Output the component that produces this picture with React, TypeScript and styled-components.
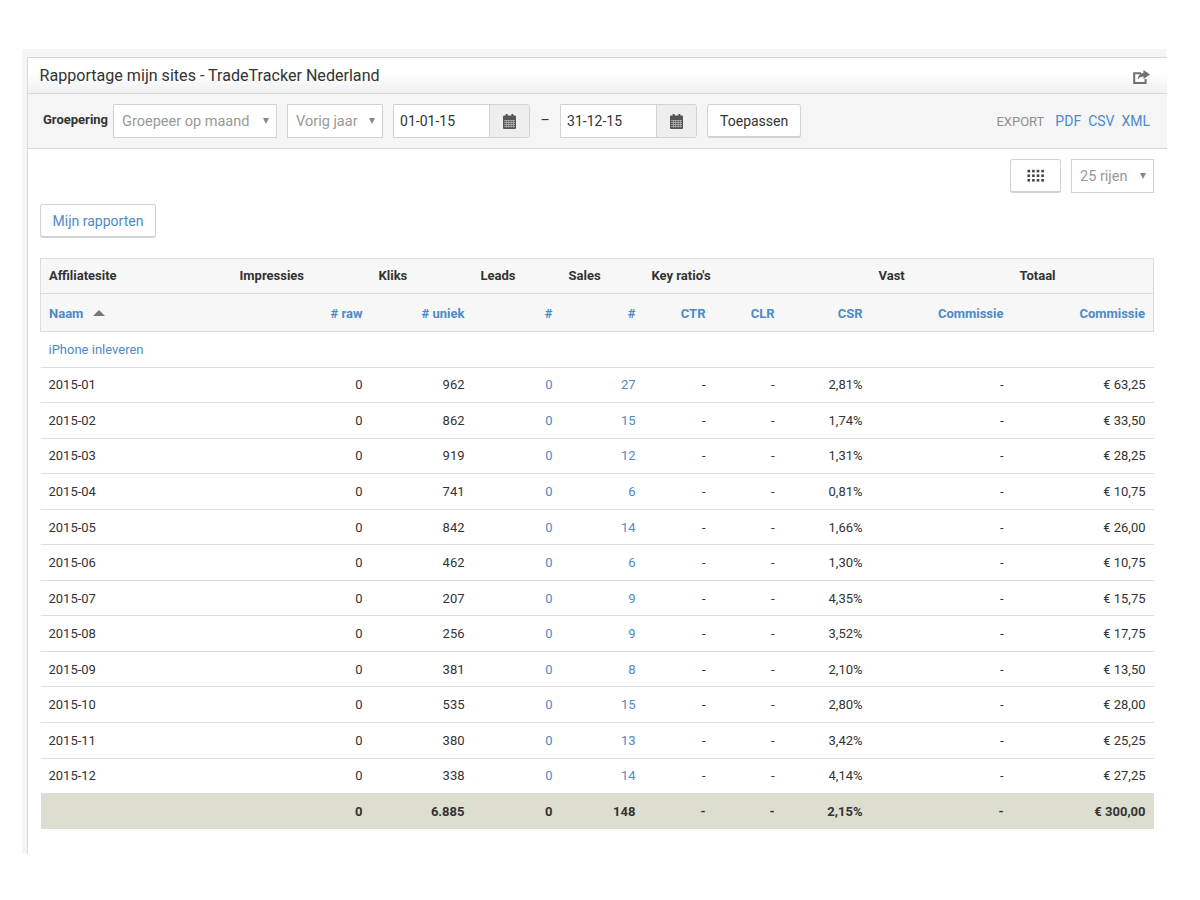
import React from "react";
import styled, { createGlobalStyle } from "styled-components";

const GlobalStyle = createGlobalStyle`
  html, body {
    margin: 0;
    padding: 0;
    background: #fff;
    font-family: Roboto, "Liberation Sans", sans-serif;
    font-size: 13px;
    color: #333;
  }
`;

const linkBlue = "#4d8ac6";

// Page shell
const Shell = styled.div`
  margin-left: 22px;
  width: 1143.5px;
  margin-top: 49px;
  height: 805px;
  padding: 8px 0 0 5px;
  box-sizing: border-box;
  background: #f4f5f8;
  display: flex;
`;

const Panel = styled.div`
  flex: 1;
  background: #fff;
  border-left: 1px solid #d6d8de;
  border-top: 1px solid #d6d6d6;
  display: flex;
  flex-direction: column;
`;

const PanelHeader = styled.div`
  height: 35px;
  border-bottom: 1px solid #dadada;
  background: linear-gradient(to bottom, #fff 45%, #eef0f2 100%);
  display: flex;
  align-items: center;
  justify-content: space-between;
  padding: 0 16.5px 0 11.5px;
`;

const PanelTitle = styled.h2`
  margin: 0;
  font-size: 16.1px;
  font-weight: 400;
  color: #333;
`;

const ShareButton = styled.span`
  display: flex;
  margin-top: 3px;
`;

// Filter bar
const Toolbar = styled.div`
  height: 55px;
  box-sizing: border-box;
  background: #f5f5f5;
  border-bottom: 1px solid #d8d8d8;
  display: flex;
  align-items: center;
  padding: 0 16.5px 0 15px;
`;

const FilterLabel = styled.label`
  font-size: 13px;
  font-weight: 700;
  color: #333;
  margin-right: 5px;
  margin-bottom: 3px;
`;

const Select = styled.div<{ $width: number; $gap?: number }>`
  width: ${(p) => p.$width}px;
  height: 34px;
  box-sizing: border-box;
  flex: none;
  margin-right: ${(p) => p.$gap ?? 0}px;
  background: #fff;
  border: 1px solid #d2d2d2;
  color: #999;
  font-size: 14.5px;
  display: flex;
  align-items: center;
  justify-content: space-between;
  padding: 0 7px 0 8px;
`;

const Caret = styled.span`
  width: 0;
  height: 0;
  border-left: 3.5px solid transparent;
  border-right: 3.5px solid transparent;
  border-top: 6px solid #888;
`;

const DateGroup = styled.div`
  display: flex;
  width: 137px;
  height: 34px;
  flex: none;
  box-sizing: border-box;
  border: 1px solid #d2d2d2;
  border-radius: 0 3px 3px 0;
  overflow: hidden;
`;

const DateValue = styled.div`
  flex: 1;
  background: #fff;
  display: flex;
  align-items: center;
  padding-left: 6px;
  font-size: 14px;
  color: #333;
`;

const DateAddon = styled.div`
  width: 39px;
  background: #eee;
  border-left: 1px solid #d2d2d2;
  display: flex;
  align-items: center;
  justify-content: center;
`;

const DateDash = styled.span`
  width: 30px;
  text-align: center;
  font-size: 14px;
  color: #333;
  flex: none;
  margin-bottom: 3px;
`;

const Button = styled.button`
  box-sizing: border-box;
  height: 34px;
  flex: none;
  background: #fff;
  border: 1px solid #d2d2d2;
  border-bottom-width: 2px;
  border-radius: 3px;
  font-family: inherit;
  font-size: 14px;
  color: #333;
  padding: 0 12px;
  cursor: pointer;
`;

const ApplyButton = styled(Button)`
  margin-left: 10px;
`;

const ExportGroup = styled.div`
  margin-left: auto;
  display: flex;
  align-items: center;
  gap: 7px;
  font-size: 14px;
`;

const ExportLabel = styled.span`
  font-size: 13px;
  color: #8f8f8f;
  margin-right: 4px;
`;

const ExportLink = styled.a`
  color: ${linkBlue};
`;

// Report body
const Content = styled.div`
  padding: 10px 12.5px 0 12px;
`;

const TableOptions = styled.div`
  display: flex;
  justify-content: flex-end;
  align-items: flex-start;
  gap: 10px;
`;

const GridButton = styled(Button)`
  width: 51px;
  display: flex;
  align-items: center;
  justify-content: center;
  padding: 0;
`;

const ReportsButton = styled(Button)`
  display: block;
  margin-top: 11px;
  width: 116px;
  color: ${linkBlue};
  padding: 0;
`;

const ReportTable = styled.table`
  margin-top: 20px;
  width: 1113px;
  table-layout: fixed;
  border-collapse: collapse;
`;

const HeadCell = styled.th<{ $right?: boolean; $blue?: boolean; $height: number; $shift: number }>`
  height: ${(p) => p.$height}px;
  padding: ${(p) => Math.max(p.$shift, 0)}px 8px ${(p) => Math.max(-p.$shift, 0)}px;
  box-sizing: border-box;
  background: #f7f7f7;
  border-top: 1px solid #dcdcdc;
  border-bottom: 1px solid #dcdcdc;
  font-size: 13px;
  font-weight: 700;
  text-align: ${(p) => (p.$right ? "right" : "left")};
  color: ${(p) => (p.$blue ? linkBlue : "#333")};
  white-space: nowrap;
  &:first-child {
    border-left: 1px solid #dcdcdc;
  }
  &:last-child {
    border-right: 1px solid #dcdcdc;
  }
`;

const SortArrow = styled.span`
  display: inline-block;
  width: 0;
  height: 0;
  margin-left: 6px;
  vertical-align: 2px;
  border-left: 6px solid transparent;
  border-right: 6px solid transparent;
  border-bottom: 6px solid #777;
`;

const Cell = styled.td<{ $right?: boolean; $blue?: boolean }>`
  height: 35.55px;
  padding: 0 8px;
  box-sizing: border-box;
  border-bottom: 1px solid #dedede;
  font-size: 13px;
  text-align: ${(p) => (p.$right ? "right" : "left")};
  color: ${(p) => (p.$blue ? linkBlue : "#333")};
`;

const TotalCell = styled.td<{ $right?: boolean }>`
  height: 35.5px;
  padding: 0 8px;
  box-sizing: border-box;
  background: #dddecf;
  font-size: 13px;
  font-weight: 700;
  color: #333;
  text-align: ${(p) => (p.$right ? "right" : "left")};
`;

const columnWidths = [191, 139, 102, 88, 83, 70, 69, 88, 141, 142];

const groups: [string, number][] = [
  ["Affiliatesite", 1],
  ["Impressies", 1],
  ["Kliks", 1],
  ["Leads", 1],
  ["Sales", 1],
  ["Key ratio's", 3],
  ["Vast", 1],
  ["Totaal", 1],
];

const subHeads = ["# raw", "# uniek", "#", "#", "CTR", "CLR", "CSR", "Commissie", "Commissie"];

const rows = [
  ["2015-01", "962", "27", "2,81%", "63,25"],
  ["2015-02", "862", "15", "1,74%", "33,50"],
  ["2015-03", "919", "12", "1,31%", "28,25"],
  ["2015-04", "741", "6", "0,81%", "10,75"],
  ["2015-05", "842", "14", "1,66%", "26,00"],
  ["2015-06", "462", "6", "1,30%", "10,75"],
  ["2015-07", "207", "9", "4,35%", "15,75"],
  ["2015-08", "256", "9", "3,52%", "17,75"],
  ["2015-09", "381", "8", "2,10%", "13,50"],
  ["2015-10", "535", "15", "2,80%", "28,00"],
  ["2015-11", "380", "13", "3,42%", "25,25"],
  ["2015-12", "338", "14", "4,14%", "27,25"],
];

const totals = ["0", "6.885", "0", "148", "-", "-", "2,15%", "-", "€ 300,00"];

const GridIcon = () => (
  <svg width="17" height="13" viewBox="0 0 17 13" fill="#444">
    {[0, 1, 2].map((r) =>
      [0, 1, 2, 3].map((c) => (
        <rect key={`${r}-${c}`} x={c * 4.6 + 0.5} y={r * 4.6 + 0.8} width="2.6" height="2.6" />
      ))
    )}
  </svg>
);

const CalendarIcon = () => (
  <svg width="13" height="15" viewBox="0 0 13 15">
    <rect x="0" y="1.5" width="13" height="13.5" rx="1" fill="#555" />
    <rect x="2.6" y="0" width="2" height="3.4" fill="#555" />
    <rect x="8.4" y="0" width="2" height="3.4" fill="#555" />
    {[6.2, 8.2, 10.2, 12.2].map((y) => (
      <rect key={y} x="1" y={y} width="11" height="0.7" fill="#bbb" />
    ))}
    {[3, 5.4, 7.8, 10.2].map((x) => (
      <rect key={x} x={x} y="6" width="0.7" height="7.5" fill="#bbb" />
    ))}
  </svg>
);

const ShareIcon = () => (
  <svg width="17" height="14" viewBox="0 0 17 14" fill="none">
    <path d="M8 3.2H1.2V12.9H12.6V9" stroke="#6f6f6f" strokeWidth="2" />
    <path d="M10.5 0L17 4.6L10.5 9V6.4C8 6.4 6 7.4 4.8 9.6C4.8 6 7 3.2 10.5 3Z" fill="#6f6f6f" />
  </svg>
);

const App: React.FC = () => {
  return (
    <>
      <GlobalStyle />
      <Shell>
        <Panel>
          <PanelHeader>
            <PanelTitle>Rapportage mijn sites - TradeTracker Nederland</PanelTitle>
            <ShareButton>
              <ShareIcon />
            </ShareButton>
          </PanelHeader>

          <Toolbar>
            <FilterLabel>Groepering</FilterLabel>
            <Select $width={164} $gap={10}>
              Groepeer op maand <Caret />
            </Select>
            <Select $width={96} $gap={10}>
              Vorig jaar <Caret />
            </Select>
            <DateGroup>
              <DateValue>01-01-15</DateValue>
              <DateAddon>
                <CalendarIcon />
              </DateAddon>
            </DateGroup>
            <DateDash>–</DateDash>
            <DateGroup>
              <DateValue>31-12-15</DateValue>
              <DateAddon>
                <CalendarIcon />
              </DateAddon>
            </DateGroup>
            <ApplyButton>Toepassen</ApplyButton>
            <ExportGroup>
              <ExportLabel>EXPORT</ExportLabel>
              <ExportLink>PDF</ExportLink>
              <ExportLink>CSV</ExportLink>
              <ExportLink>XML</ExportLink>
            </ExportGroup>
          </Toolbar>

          <Content>
            <TableOptions>
              <GridButton>
                <GridIcon />
              </GridButton>
              <Select $width={83}>
                25 rijen <Caret />
              </Select>
            </TableOptions>
            <ReportsButton>Mijn rapporten</ReportsButton>

            <ReportTable>
              <colgroup>
                {columnWidths.map((w, i) => (
                  <col key={i} width={w} />
                ))}
              </colgroup>
              <thead>
                <tr>
                  {groups.map(([name, span]) => (
                    <HeadCell key={name} colSpan={span} $height={35} $shift={-2}>
                      {name}
                    </HeadCell>
                  ))}
                </tr>
                <tr>
                  <HeadCell $blue $height={38} $shift={2}>
                    Naam <SortArrow />
                  </HeadCell>
                  {subHeads.map((h, i) => (
                    <HeadCell key={i} $right $blue $height={38} $shift={2}>
                      {h}
                    </HeadCell>
                  ))}
                </tr>
              </thead>
              <tbody>
                <tr>
                  <Cell $blue colSpan={10}>
                    iPhone inleveren
                  </Cell>
                </tr>
                {rows.map(([month, clicks, sales, csr, total]) => (
                  <tr key={month}>
                    <Cell>{month}</Cell>
                    <Cell $right>0</Cell>
                    <Cell $right>{clicks}</Cell>
                    <Cell $right $blue>
                      0
                    </Cell>
                    <Cell $right $blue>
                      {sales}
                    </Cell>
                    <Cell $right>-</Cell>
                    <Cell $right>-</Cell>
                    <Cell $right>{csr}</Cell>
                    <Cell $right>-</Cell>
                    <Cell $right>€ {total}</Cell>
                  </tr>
                ))}
                <tr>
                  <TotalCell />
                  {totals.map((t, i) => (
                    <TotalCell key={i} $right>
                      {t}
                    </TotalCell>
                  ))}
                </tr>
              </tbody>
            </ReportTable>
          </Content>
        </Panel>
      </Shell>
    </>
  );
};

export default App;
